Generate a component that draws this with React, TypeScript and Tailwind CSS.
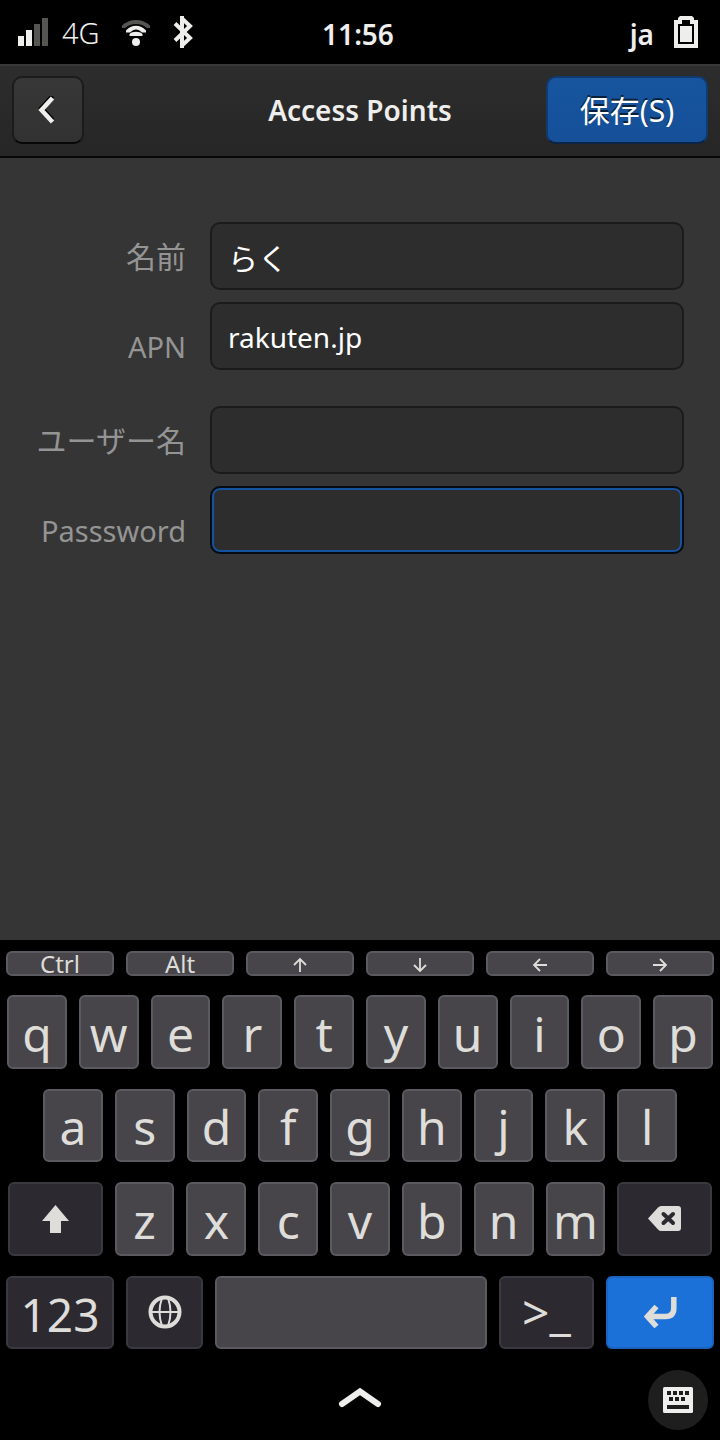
import type { ReactNode } from "react";

const KEY =
  "flex h-full w-full min-w-0 items-center justify-center rounded-md border-2 text-[#deddda]";
const LIGHT = "border-[#5b5a61] bg-[#474549]";
const DARK = "border-[#3a3840] bg-[#2c2930]";
const ACCENT = "border-[#1a63bf] bg-[#1c71d8]";

type KeyProps = { label: string; tone?: string; size?: string; children?: ReactNode };

function Key({ label, tone = LIGHT, size = "text-5xl", children }: KeyProps) {
  return (
    <button type="button" aria-label={label} className={`${KEY} ${tone} ${size}`}>
      {children}
    </button>
  );
}

function LetterKeys({ letters }: { letters: string }) {
  return (
    <>
      {letters.split("").map((c) => (
        <Key key={c} label={c} size="pt-1 text-5xl leading-none">
          {c}
        </Key>
      ))}
    </>
  );
}

function ArrowIcon({ d }: { d: string }) {
  return (
    <svg width="16" height="16" viewBox="0 0 16 16" fill="none" stroke="currentColor" strokeWidth="1.8" className="mt-0.5">
      <path d={d} />
    </svg>
  );
}

function SignalIcon() {
  return (
    <svg width="30" height="28" viewBox="0 0 30 28" fill="#eeeeec">
      <path d="M0 18h6v10H0zM8 12h6v16H8z" />
      <path d="M16 6h6v22h-6zM24 0h6v28h-6z" fill="#555552" />
    </svg>
  );
}

function WifiIcon() {
  return (
    <svg width="28" height="28" viewBox="0 0 28 28" fill="#eeeeec">
      <path d="M0 7.5C7 0 21 0 28 7.5V10H25C19 4.5 9 4.5 3 10H0Z" fill="#555552" />
      <path d="M4 12.5C9 6 19 6 24 12.5V14.5H20C16 10.5 12 10.5 8 14.5H4Z" />
      <path d="M7.5 16C10 13 18 13 20.5 16V18H7.5Z" />
      <circle cx="14" cy="24" r="4" />
    </svg>
  );
}

function BluetoothIcon() {
  return (
    <svg width="22" height="32" viewBox="0 0 22 32" fill="none" stroke="#eeeeec" strokeWidth="4">
      <path d="M3 7.5 18 22 10 29.5V2.5L18 10 3 24.5" />
      <path d="M10 0V32" />
    </svg>
  );
}

function BatteryIcon() {
  return (
    <svg width="24" height="32" viewBox="0 0 24 32" fill="#eeeeec">
      <path
        fillRule="evenodd"
        d="M0 4H4V2L6 0H18L20 2V4H24V32H0ZM4 8V28H20V8H16V4H8V8Z"
      />
      <path d="M6 10H18V26H6Z" />
    </svg>
  );
}

type FieldProps = { id: string; label: string; latin?: boolean; value?: string; type?: string; active?: boolean };

function Field({ id, label, latin, value = "", type = "text", active }: FieldProps) {
  return (
    <div className="grid grid-cols-[150px_minmax(0,1fr)] gap-6">
      <label
        htmlFor={id}
        className={`whitespace-nowrap text-right text-[#949494] ${
          latin ? "self-end text-[29px] leading-[46px]" : "self-center pt-0.5 text-[30px] leading-[44px]"
        }`}
      >
        {label}
      </label>
      <input
        id={id}
        type={type}
        defaultValue={value}
        className={`h-[68px] w-full rounded-[10px] border-2 bg-[#2d2d2d] px-4 pt-0.5 text-white outline-none ${
          latin ? "text-[28px]" : "text-[30px]"
        } ${active ? "border-[#040b14] inset-ring-2 inset-ring-[#15539e]" : "border-[#1b1b1b]"}`}
      />
    </div>
  );
}

export default function App() {
  return (
    <div className="flex min-h-screen flex-col bg-black font-['Noto_Sans','Noto_Sans_CJK_JP',sans-serif]">
      <div className="grid h-16 grid-cols-[1fr_auto_1fr] items-center pr-[22px] pl-[18px] text-[28px] leading-none text-[#eeeeec]">
        <div className="flex items-center gap-[22px]">
          <div className="flex items-center gap-3.5">
            <SignalIcon />
            <span className="text-[29px] font-light">4G</span>
          </div>
          <WifiIcon />
          <BluetoothIcon />
        </div>
        <time className="pt-1 font-semibold">11:56</time>
        <div className="flex items-center justify-end gap-5">
          <span className="pt-1 font-semibold">ja</span>
          <BatteryIcon />
        </div>
      </div>

      <header className="grid grid-cols-[1fr_auto_1fr] items-center border-t-2 border-b-2 border-t-[#383838] border-b-[#070707] bg-linear-to-b from-[#2d2d2d] to-[#262626] px-3 pt-2.5 pb-3">
        <button
          type="button"
          aria-label="Back"
          className="flex h-[68px] w-[72px] items-center justify-center rounded-[10px] border-2 border-[#1b1b1b] border-b-[#070707] bg-linear-to-b from-[#373737] to-[#323232]"
        >
          <svg width="20" height="28" viewBox="0 0 20 28" fill="none" strokeWidth="4.500">
            <path d="M14.500 0 3.500 12 14.500 24" stroke="#000" />
            <path d="M14.500 2 3.500 14 14.500 26" stroke="#eeeeec" />
          </svg>
        </button>
        <h1 className="text-[28px] leading-none font-semibold text-[#eeeeec]">Access Points</h1>
        <button
          type="button"
          className="h-[68px] w-[162px] justify-self-end rounded-[10px] border-2 border-[#0f3b71] border-b-[#092444] bg-linear-to-b from-[#17559f] to-[#155099] pt-0.5 text-[30px] leading-none text-white [text-shadow:0_-2px_#0a1f38]"
        >
          保存(S)
        </button>
      </header>

      <main className="flex-1 bg-[#353535] px-9 pt-16 pb-16">
        <form className="flex flex-col gap-9">
          <div className="flex flex-col gap-3">
            <Field id="name" label="名前" value="らく" />
            <Field id="apn" label="APN" latin value="rakuten.jp" />
          </div>
          <div className="flex flex-col gap-3">
            <Field id="user" label="ユーザー名" />
            <Field id="password" label="Passsword" latin type="password" active />
          </div>
        </form>
      </main>

      <section aria-label="Keyboard" className="flex flex-col gap-[19px] pt-[11px] pb-[11px]">
        <div className="grid h-[25px] grid-cols-6 gap-3 px-1.5">
          <Key label="Ctrl" size="text-2xl leading-[21px]">Ctrl</Key>
          <Key label="Alt" size="text-2xl leading-[21px]">Alt</Key>
          <Key label="Up"><ArrowIcon d="M8 15V2M2 8 8 2l6 6" /></Key>
          <Key label="Down"><ArrowIcon d="M8 1V14M2 8l6 6 6-6" /></Key>
          <Key label="Left"><ArrowIcon d="M15 8H2M8 2 2 8l6 6" /></Key>
          <Key label="Right"><ArrowIcon d="M1 8H14M8 2l6 6-6 6" /></Key>
        </div>
        <div className="grid h-[354px] grid-rows-4 gap-5">
          <div className="grid grid-cols-10 gap-3 px-[7px]">
            <LetterKeys letters="qwertyuiop" />
          </div>
          <div className="grid grid-cols-9 gap-3 px-[43px]">
            <LetterKeys letters="asdfghjkl" />
          </div>
          <div className="grid grid-cols-[95fr_repeat(7,60fr)_95fr] gap-3 px-2">
            <Key label="Shift" tone={DARK}>
              <svg width="27" height="28" viewBox="0 0 27 28" fill="currentColor">
                <path d="M0 16 13.500 0 27 16H19V28H8V16Z" />
              </svg>
            </Key>
            <LetterKeys letters="zxcvbnm" />
            <Key label="Backspace" tone={DARK}>
              <svg width="33" height="25" viewBox="0 0 33 25">
                <path d="M0 12.500 10 1.500Q11.500 0 13 0H30Q33 0 33 3V22Q33 25 30 25H13Q11.500 25 10 23.500Z" fill="currentColor" />
                <path d="M15.500 8 25 17M25 8 15.500 17" stroke="#2c2930" strokeWidth="4" strokeLinecap="round" />
              </svg>
            </Key>
          </div>
          <div className="grid grid-cols-[108fr_77fr_272fr_95fr_108fr] gap-3 px-1.5">
            <Key label="123" tone={DARK} size="pt-1 text-[46px] leading-none">123</Key>
            <Key label="Language" tone={DARK}>
              <svg width="34" height="34" viewBox="0 0 34 34" fill="none" stroke="currentColor">
                <circle cx="17" cy="17" r="14.500" strokeWidth="4" />
                <path d="M3 17H31M14 3Q9 17 14 31M20 3Q25 17 20 31" strokeWidth="2" />
              </svg>
            </Key>
            <Key label="Space" />
            <Key label="Terminal" tone={DARK} size="text-5xl leading-none">&gt;_</Key>
            <Key label="Enter" tone={ACCENT}>
              <svg width="33" height="31" viewBox="0 0 33 31" fill="none" stroke="currentColor" strokeWidth="5.500">
                <path d="M29.800 0V11Q29.800 19.500 21.500 19.500H5" />
                <path d="M12.500 9.500 3.500 19.500 12.500 29.500" />
              </svg>
            </Key>
          </div>
        </div>
      </section>

      <nav className="grid h-20 grid-cols-[1fr_auto_1fr] items-center px-3">
        <button type="button" aria-label="Overview" className="col-start-2 pb-1">
          <svg width="44" height="22" viewBox="0 0 44 22" fill="none" stroke="#eeeeec" strokeWidth="6" strokeLinecap="round">
            <path d="M4 17 22 4.500 40 17" />
          </svg>
        </button>
        <button
          type="button"
          aria-label="Toggle keyboard"
          className="flex size-[60px] items-center justify-center justify-self-end rounded-full bg-[#1e1e1e]"
        >
          <svg width="30" height="26" viewBox="0 0 30 26">
            <rect width="30" height="26" rx="1.500" fill="#eeeeec" />
            <path
              d="M4 4h4v4H4zM10 4h4v4h-4zM16 4h4v4h-4zM22 4h4v4h-4zM6 10h4v4H6zM12 10h4v4h-4zM18 10h4v4h-4zM4 18h22v4H4z"
              fill="#1e1e1e"
            />
          </svg>
        </button>
      </nav>
    </div>
  );
}
